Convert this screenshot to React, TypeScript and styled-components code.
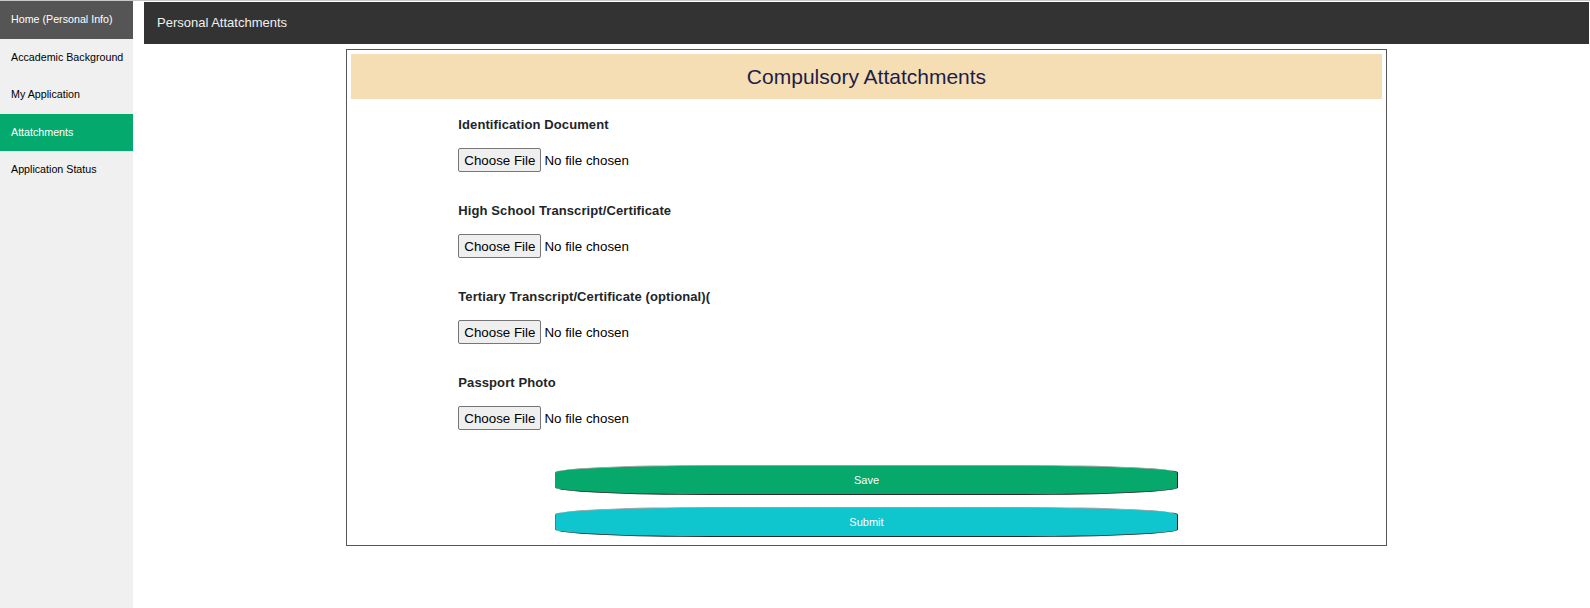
import React from "react";
import styled, { createGlobalStyle } from "styled-components";

const GlobalStyle = createGlobalStyle`
  html, body { margin: 0; padding: 0; background: #ffffff; }
  body { font-family: "Liberation Sans", Arial, sans-serif; }
  * { box-sizing: border-box; }
`;

const Page = styled.div`
  display: flex;
  min-height: 100vh;
  border-top: 1px solid #c8c8c8;
`;

const Sidebar = styled.nav`
  width: 133px;
  flex: none;
  background: #f0f0f0;
  display: flex;
  flex-direction: column;
`;

const NavLink = styled.a<{ $variant?: "hover" | "active" }>`
  display: block;
  padding: 12px 11px;
  font-size: 10.7px;
  line-height: 13.5px;
  white-space: nowrap;
  text-decoration: none;
  color: ${(p) => (p.$variant ? "#ffffff" : "#000000")};
  background: ${(p) =>
    p.$variant === "active" ? "#04aa6d" : p.$variant === "hover" ? "#555555" : "transparent"};
`;

const Main = styled.main`
  flex: 1;
  padding: 1px 1px 0 11px;
  display: flex;
  flex-direction: column;
`;

const Header = styled.header`
  height: 42px;
  background: #333333;
  color: #f0f0f0;
  font-size: 13px;
  line-height: 42px;
  padding-left: 13px;
`;

const Card = styled.section`
  width: 72%;
  margin: 5px auto 0;
  border: 1px solid #555555;
  padding: 4px;
`;

const CardTitle = styled.h2`
  margin: 0;
  height: 45px;
  line-height: 45px;
  background: #f5deb3;
  color: #1d1d4a;
  font-size: 21px;
  font-weight: normal;
  text-align: center;
`;

const Fields = styled.div`
  display: flex;
  flex-direction: column;
  gap: 31px;
  padding: 18px 0 0 107px;
`;

const Field = styled.div`
  display: flex;
  flex-direction: column;
  align-items: flex-start;
  gap: 16px;
`;

const Label = styled.label`
  font-size: 13px;
  line-height: 15px;
  font-weight: bold;
  letter-spacing: 0.1px;
  color: #212529;
`;

const FileInput = styled.input`
  font-family: "Liberation Sans", Arial, sans-serif;
  font-size: 13.33px;
  height: 24px;
  color: #000000;
  &::file-selector-button {
    font-family: "Liberation Sans", Arial, sans-serif;
    font-size: 13.33px;
    height: 24px;
    padding: 1px 5px;
    margin-right: 3px;
    background: #efefef;
    border: 1px solid #767676;
    border-radius: 2px;
    color: #000000;
  }
`;

const Actions = styled.div`
  display: flex;
  flex-direction: column;
  align-items: center;
  gap: 12px;
  margin-top: 35px;
  padding-bottom: 4px;
`;

const PillButton = styled.button<{ $color: string }>`
  width: 623px;
  height: 30px;
  border-radius: 25%;
  border-width: 1px;
  border-style: solid;
  border-color: #a0a0a0 #1a1a1a #2a2a2a #707070;
  background: ${(p) => p.$color};
  color: #ffffff;
  font-family: "Liberation Sans", Arial, sans-serif;
  font-size: 11px;
  cursor: pointer;
`;

const fields = [
  { id: "id-doc", label: "Identification Document" },
  { id: "hs", label: "High School Transcript/Certificate" },
  { id: "tert", label: "Tertiary Transcript/Certificate (optional)(" },
  { id: "photo", label: "Passport Photo" },
];

export default function App() {
  return (
    <>
      <GlobalStyle />
      <Page>
        <Sidebar>
          <NavLink href="#" $variant="hover">Home (Personal Info)</NavLink>
          <NavLink href="#">Accademic Background</NavLink>
          <NavLink href="#">My Application</NavLink>
          <NavLink href="#" $variant="active">Attatchments</NavLink>
          <NavLink href="#">Application Status</NavLink>
        </Sidebar>
        <Main>
          <Header>Personal Attatchments</Header>
          <Card>
            <CardTitle>Compulsory Attatchments</CardTitle>
            <Fields>
              {fields.map((f) => (
                <Field key={f.id}>
                  <Label htmlFor={f.id}>{f.label}</Label>
                  <FileInput id={f.id} type="file" />
                </Field>
              ))}
            </Fields>
            <Actions>
              <PillButton $color="#06a86b">Save</PillButton>
              <PillButton $color="#10c6ce">Submit</PillButton>
            </Actions>
          </Card>
        </Main>
      </Page>
    </>
  );
}
